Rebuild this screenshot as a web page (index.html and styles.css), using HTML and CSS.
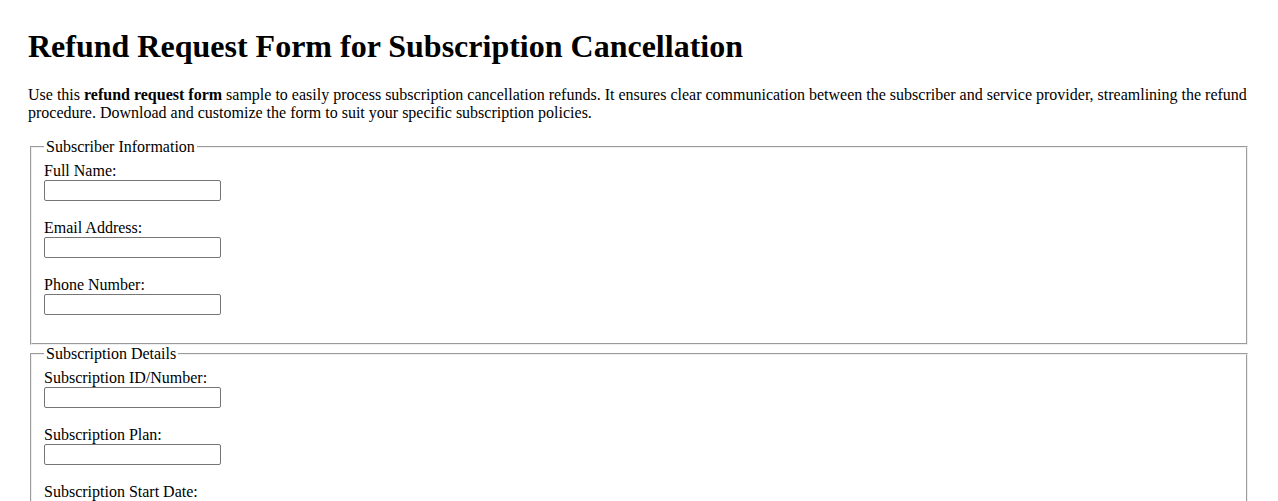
FILE: index.html
```html
<!DOCTYPE html>
<html lang="en">
<head>
    <meta charset="UTF-8">
    <meta name="viewport" content="width=device-width, initial-scale=1.0">
    <title>Refund Request Form for Subscription Cancellation</title>
    <link rel="stylesheet" href="styles.css">
</head>
<body>
    <div class="container">
        <h1>Refund Request Form for Subscription Cancellation</h1>
        <p>Use this <strong>refund request form</strong> sample to easily process subscription cancellation refunds. It ensures clear communication between the subscriber and service provider, streamlining the refund procedure. Download and customize the form to suit your specific subscription policies.</p>

        <form id="refundForm">
            <!-- Subscriber Information -->
            <fieldset>
                <legend>Subscriber Information</legend>
                <div class="field">
                    <label for="fullName">Full Name:</label>
                    <input type="text" id="fullName">
                </div>
                <div class="field">
                    <label for="email">Email Address:</label>
                    <input type="email" id="email">
                </div>
                <div class="field">
                    <label for="phone">Phone Number:</label>
                    <input type="tel" id="phone">
                </div>
            </fieldset>

            <!-- Subscription Details -->
            <fieldset>
                <legend>Subscription Details</legend>
                <div class="field">
                    <label for="subscriptionId">Subscription ID/Number:</label>
                    <input type="text" id="subscriptionId">
                </div>
                <div class="field">
                    <label for="plan">Subscription Plan:</label>
                    <input type="text" id="plan">
                </div>
                <div class="field">
                    <label for="startDate">Subscription Start Date:</label>
                    <input type="text" id="startDate">
                </div>
                <div class="field">
                    <label for="cancelDate">Cancellation Date:</label>
                    <input type="text" id="cancelDate">
                </div>
            </fieldset>

            <!-- Refund Details -->
            <fieldset>
                <legend>Refund Details</legend>
                <div class="field">
                    <label for="amount">Refund Amount Requested:</label>
                    <input type="text" id="amount">
                </div>
                <div class="field">
                    <label for="reason">Reason for Cancellation:</label>
                    <input type="text" id="reason">
                </div>
            </fieldset>
        </form>
    </div>
</body>
</html>
```

FILE: styles.css
```css
body {
    font-family: "Liberation Serif", "Times New Roman", serif;
    font-size: 16px;
    margin: 8px;
    color: #000;
}
.container {
    padding: 20px;
}
h1 {
    font-size: 32px;
    margin: 0 0 21px;
}
p {
    margin: 16px 0;
}
fieldset {
    margin: 0 2px;
    padding-top: 6px;
}
.field {
    margin-bottom: 18px;
}
.field label {
    display: block;
}
.field input {
    display: block;
    box-sizing: border-box;
    width: 177px;
    height: 21px;
    margin: 0;
    border: 1px solid #767676;
    border-radius: 2px;
}
```
